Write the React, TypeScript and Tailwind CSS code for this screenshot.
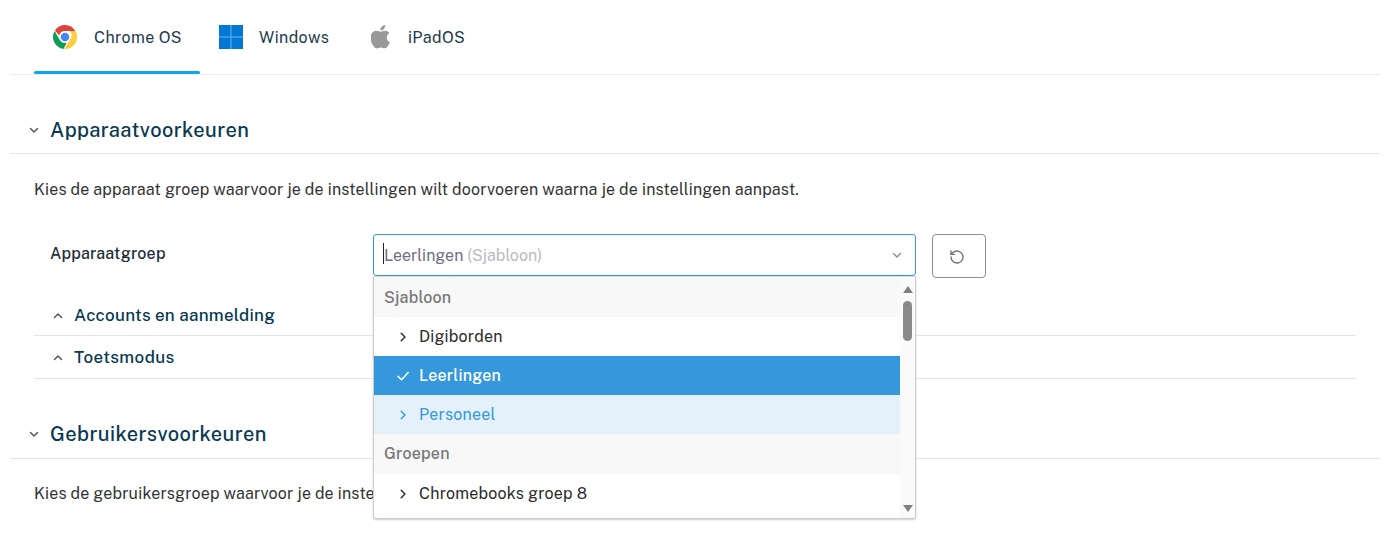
import React from "react";

const Chev = ({ d, className }: { d: string; className?: string }) => (
  <svg viewBox="0 0 12 12" className={className} fill="none" stroke="currentColor" strokeWidth="1.4" strokeLinecap="round" strokeLinejoin="round">
    <path d={d} />
  </svg>
);
const DOWN = "M2.5 4.5 6 8l3.5-3.5";
const UP = "M2.5 7.5 6 4l3.5 3.5";
const RIGHT = "M4.2 2.2 8 6l-3.8 3.8";

const ChromeIcon = () => (
  <svg viewBox="0 0 48 48" className="w-6 h-6 shrink-0">
    <path fill="#DB4437" d="M24 0a24 24 0 0 1 20.8 12H24a12 12 0 0 0-11.6 8.9L3.9 11A24 24 0 0 1 24 0z" />
    <path fill="#0F9D58" d="M3.2 12 13.6 30a12 12 0 0 0 13.8 5.6L21 47.8A24 24 0 0 1 3.2 12z" />
    <path fill="#FFCD40" d="M44.8 12A24 24 0 0 1 22.5 48l10.4-18A12 12 0 0 0 33.6 12z" />
    <circle cx="24" cy="24" r="11" fill="#fff" />
    <circle cx="24" cy="24" r="8.5" fill="#4285F4" />
  </svg>
);
const WindowsIcon = () => (
  <svg viewBox="0 0 24 24" className="w-6 h-6 shrink-0">
    <rect width="24" height="24" fill="#0078D4" />
    <path d="M11.5 0h1v24h-1zM0 11.5h24v1H0z" fill="#6CB2E8" />
  </svg>
);
const AppleIcon = () => (
  <svg viewBox="2.4 2.8 15.4 19" preserveAspectRatio="none" className="w-5 h-6 shrink-0" fill="#999999">
    <path d="M14.6 12.6c0-2.3 1.9-3.4 2-3.5-1.1-1.6-2.8-1.8-3.4-1.8-1.4-.1-2.8.9-3.5.9-.7 0-1.9-.9-3.1-.8-1.6 0-3 .9-3.8 2.3-1.6 2.8-.4 7 1.2 9.3.8 1.1 1.7 2.4 2.9 2.3 1.2 0 1.6-.7 3-.7s1.8.7 3 .7c1.3 0 2-1.1 2.8-2.2.9-1.3 1.2-2.5 1.3-2.6-.1 0-2.4-.9-2.4-4.1zM12.4 5.8c.6-.8 1.1-1.9 1-3-1 0-2.1.6-2.8 1.4-.6.7-1.1 1.8-1 2.9 1.1.1 2.2-.5 2.8-1.3z" />
  </svg>
);

const Item = ({ label, variant }: { label: string; variant?: "sel" | "hover" }) => (
  <div
    className={
      "h-[39px] flex items-center " +
      (variant === "sel"
        ? "bg-[#3498db] text-white font-medium"
        : variant === "hover"
        ? "bg-[#e4f1fa] text-[#3498db]"
        : "bg-white text-[#2b2b2b]")
    }
  >
    <span className="w-[45px] flex justify-end pr-[9px] shrink-0">
      {variant === "sel" ? (
        <Chev d="M1.8 6.4 4.8 9.2 10.4 3" className="w-[14px] h-[14px]" />
      ) : (
        <Chev d={RIGHT} className="w-3 h-3 mr-[1px]" />
      )}
    </span>
    {label}
  </div>
);

const Group = ({ label, className }: { label: string; className?: string }) => (
  <div className={"h-[40px] flex items-center pl-[10px] bg-[#f8f8f8] text-[#777777] font-medium " + (className ?? "")}>{label}</div>
);

const Tab = ({ icon, label, active, w }: { icon: React.ReactNode; label: string; active?: boolean; w: string }) => (
  <div className={"relative h-[74px] flex items-center " + w}>
    {icon}
    <span className="text-[16px] pt-[1px] text-[#1d3a4c] tracking-[0.38px]">{label}</span>
    {active && <div className="absolute left-0 right-0 bottom-0 h-[3px] rounded-sm bg-[#0ea5e9]" />}
  </div>
);

export default function App() {
  return (
    <div
      className="h-[533px] overflow-hidden bg-white pl-[10px] pr-[6px] text-[16px] tracking-[0.17px] text-[#333333]"
      style={{ fontFamily: '"Public Sans", Inter, "Liberation Sans", sans-serif' }}
    >
      <div className="flex h-[75px] pl-6 border-b border-[#ebebf0]">
        <Tab w="w-[166px] pl-[19px]" active label="Chrome OS" icon={<span className="mr-[17px]"><ChromeIcon /></span>} />
        <Tab w="w-[170px] pl-[19px]" label="Windows" icon={<span className="mr-4"><WindowsIcon /></span>} />
        <Tab w="w-[130px] pl-px" label="iPadOS" icon={<span className="mr-[17px]"><AppleIcon /></span>} />
      </div>

      <div className="mt-[37px] h-[42px] flex items-start border-b border-[#e5e5e5] pl-[18px]">
        <Chev d={DOWN} className="w-3 h-3 mt-3 text-[#4b4b63] mr-[10px]" />
        <h2 className="text-[20px] leading-[36px] font-medium tracking-[0.4px] text-[#083a52]">Apparaatvoorkeuren</h2>
      </div>

      <p className="mt-[25px] pl-6 leading-[22px]">
        Kies de apparaat groep waarvoor je de instellingen wilt doorvoeren waarna je de instellingen aanpast.
      </p>

      <div className="mt-[33px] pl-10 flex items-start h-[44px]">
        <span className="w-[323px] font-medium text-[#1f2f3a] leading-[40px]">Apparaatgroep</span>
        <div className="relative w-[543px]">
          <div className="h-[42px] rounded-[3px] border border-[#3498db] flex items-center pl-[10px] pr-3 tracking-normal">
            <span className="relative pt-[1px] text-[#6f6f80]">
              <span className="absolute -left-px top-0 h-[21px] w-px bg-[#222222]" />
              Leerlingen <span className="text-[#bbbbc4]">(Sjabloon)</span>
            </span>
            <Chev d={DOWN} className="w-3 h-3 ml-auto text-[#8a8a9a]" />
          </div>
          <div className="absolute left-0 right-0 top-[42px] z-10 h-[243px] bg-white border border-[#cccccc] border-t-[#dddddd] rounded-b-[3px] shadow-[0_1px_2px_rgba(0,0,0,0.2)] flex overflow-hidden tracking-[0.2px]">
            <div className="w-[526px] shrink-0">
              <Group label="Sjabloon" className="pt-[1px]" />
              <Item label="Digiborden" />
              <Item label="Leerlingen" variant="sel" />
              <Item label="Personeel" variant="hover" />
              <Group label="Groepen" />
              <Item label="Chromebooks groep 8" />
            </div>
            <div className="flex-1 bg-[#fafafa] flex flex-col items-center justify-between pt-[9px] pb-[6px]">
              <div className="w-0 h-0 border-x-[5px] border-x-transparent border-b-[7px] border-b-[#808080]" />
              <div className="w-[9px] h-[40px] -mt-[40px] mb-auto translate-y-[48px] rounded-full bg-[#8a8a8a]" />
              <div className="w-0 h-0 border-x-[5px] border-x-transparent border-t-[7px] border-t-[#808080]" />
            </div>
          </div>
        </div>
        <button className="ml-4 w-[54px] h-[44px] rounded-[4px] border border-[#8c8c96] flex items-center justify-center pr-[4px] pt-[1px] text-[#6e6e78]">
          <svg viewBox="0 0 24 24" className="w-[16px] h-[16px]" fill="none" stroke="currentColor" strokeWidth="2" strokeLinecap="round" strokeLinejoin="round">
            <path d="M3 12a9 9 0 1 0 3-6.7L3 8" />
            <path d="M3 3v5h5" />
          </svg>
        </button>
      </div>

      <div className="mt-[14px] mx-6 w-[1322px]">
        <div className="h-[44px] border-b border-[#e5e5e5] flex items-center pl-[18px] pt-[4px]">
          <Chev d={UP} className="w-3 h-3 text-[#4b4b63] mr-[10px]" />
          <span className="font-medium text-[17px] tracking-[0.25px] text-[#083a52]">Accounts en aanmelding</span>
        </div>
        <div className="h-[43px] border-b border-[#e5e5e5] flex items-center pl-[18px] pt-[2px]">
          <Chev d={UP} className="w-3 h-3 text-[#4b4b63] mr-[10px]" />
          <span className="font-medium text-[17px] tracking-[0.4px] text-[#083a52]">Toetsmodus</span>
        </div>
      </div>

      <div className="mt-[37px] h-[43px] flex items-start border-b border-[#e5e5e5] pl-[18px]">
        <Chev d={DOWN} className="w-3 h-3 mt-3 text-[#4b4b63] mr-[10px]" />
        <h2 className="text-[20px] leading-[36px] font-medium tracking-[0.4px] text-[#083a52]">Gebruikersvoorkeuren</h2>
      </div>

      <p className="mt-[24px] pl-6 leading-[22px]">
        Kies de gebruikersgroep waarvoor je de instellingen wilt doorvoeren waarna je de instellingen aanpast.
      </p>
    </div>
  );
}
